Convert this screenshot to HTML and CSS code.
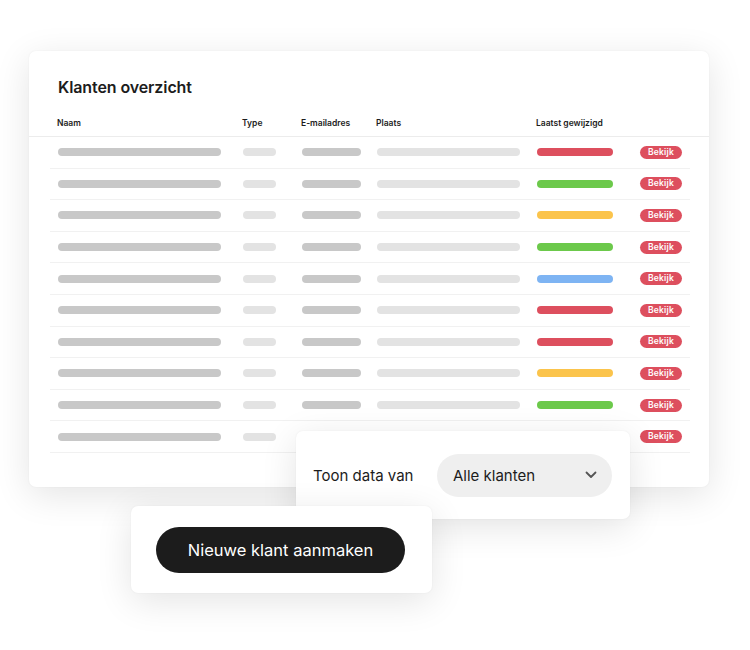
FILE: index.html
```html
<!DOCTYPE html>
<html lang="nl">
<head>
    <meta charset="UTF-8">
    <meta name="viewport" content="width=device-width, initial-scale=1.0">
    <title>Klanten overzicht</title>
    <link rel="stylesheet" href="styles.css">
</head>
<body>
    <div class="stage">
        <!-- Main table card -->
        <div class="card overview">
            <h2>Klanten overzicht</h2>
            <div class="cols head">
                <span>Naam</span>
                <span>Type</span>
                <span>E-mailadres</span>
                <span>Plaats</span>
                <span>Laatst gewijzigd</span>
                <span></span>
            </div>
            <div class="rows" id="rows">
                <!-- rows are filled in below -->
            </div>
        </div>

        <!-- Filter popup -->
        <div class="card filter">
            <span class="filter-label">Toon data van</span>
            <div class="select">
                <span>Alle klanten</span>
                <svg width="12" height="8" viewBox="0 0 12 8"><path d="M1.5 1.5 L6 6 L10.5 1.5" fill="none" stroke="#555" stroke-width="1.8" stroke-linecap="round" stroke-linejoin="round"/></svg>
            </div>
        </div>

        <!-- New client popup -->
        <div class="card create">
            <button>Nieuwe klant aanmaken</button>
        </div>
    </div>

    <script>
        const statuses = ['red', 'green', 'yellow', 'green', 'blue', 'red', 'red', 'yellow', 'green', 'red'];
        const rows = document.getElementById('rows');
        statuses.forEach(status => {
            const row = document.createElement('div');
            row.className = 'cols row';
            row.innerHTML = `
                <span><i class="bar dark name"></i></span>
                <span><i class="bar light type"></i></span>
                <span><i class="bar dark mail"></i></span>
                <span><i class="bar light place"></i></span>
                <span><i class="bar status ${status}"></i></span>
                <span><em class="badge">Bekijk</em></span>`;
            rows.appendChild(row);
        });
    </script>
</body>
</html>
```

FILE: styles.css
```css
* {
    box-sizing: border-box;
}

body {
    margin: 0;
    background: #fff;
    font-family: 'Inter', 'Liberation Sans', sans-serif;
    color: #1c1c1c;
}

.stage {
    position: relative;
    width: 750px;
    height: 650px;
    padding: 51px 0 0 29px;
}

.card {
    background: #fff;
    border-radius: 7px;
    box-shadow: 0 8px 36px rgba(0, 0, 0, 0.11), 0 0 2px rgba(0, 0, 0, 0.06);
}

.overview {
    width: 680px;
    height: 436px;
    padding-top: 26px;
}

.overview h2 {
    margin: 0 0 17px 29px;
    font-size: 16px;
    line-height: 20px;
    font-weight: 600;
    letter-spacing: -0.1px;
}

.cols {
    display: grid;
    grid-template-columns: 185px 59px 75px 160px 103px 50px;
    align-items: center;
}

.head {
    padding: 4px 0 7px 29px;
    font-size: 8.5px;
    line-height: 11px;
    font-weight: 600;
    border-bottom: 1.5px solid #ececec;
}

.head span {
    margin-left: -1px;
}

.rows {
    margin: 0 19px 0 21px;
}

.row {
    height: 31.6px;
    padding-left: 8px;
    border-bottom: 1px solid #f1f1f1;
}

.row span {
    display: flex;
    align-items: center;
}

.bar {
    display: block;
    height: 8px;
    border-radius: 4px;
}

.dark {
    background: #c8c8c8;
}

.light {
    background: #e3e3e3;
}

.name { width: 163px; }
.type { width: 33px; }
.mail { width: 59px; }
.place { width: 143px; }
.status { width: 76px; }

.red { background: #dd4f5e; }
.green { background: #6cc94b; }
.yellow { background: #fbc44c; }
.blue { background: #7eb4f3; }

.badge {
    display: inline-block;
    width: 42px;
    height: 13px;
    line-height: 13px;
    border-radius: 7px;
    background: #dd4f5e;
    color: #fff;
    font-style: normal;
    font-size: 8.5px;
    font-weight: 600;
    text-align: center;
    letter-spacing: 0.2px;
}

.filter {
    position: absolute;
    left: 296px;
    top: 431px;
    width: 334px;
    height: 88px;
    display: flex;
    align-items: center;
    justify-content: space-between;
    padding: 0 18px 0 17px;
}

.filter-label {
    font-size: 15px;
}

.select {
    width: 175px;
    height: 43px;
    border-radius: 22px;
    background: #efefef;
    display: flex;
    align-items: center;
    justify-content: space-between;
    padding: 0 15px 0 16px;
    font-size: 15px;
}

.create {
    position: absolute;
    left: 131px;
    top: 506px;
    width: 301px;
    height: 87px;
    display: flex;
    align-items: center;
    padding-left: 25px;
}

.create button {
    width: 249px;
    height: 46px;
    border: none;
    border-radius: 23px;
    background: #1c1c1c;
    color: #fff;
    font-family: inherit;
    font-size: 16.5px;
    cursor: pointer;
}
```
